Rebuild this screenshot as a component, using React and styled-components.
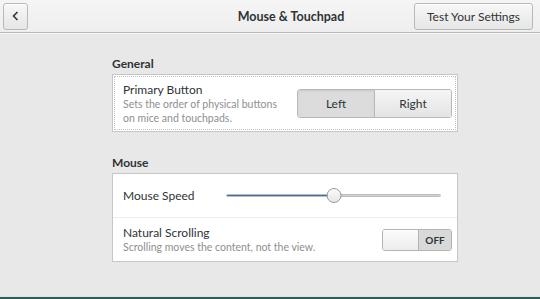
import styled, { createGlobalStyle } from "styled-components";

const GlobalStyle = createGlobalStyle`
  html, body {
    margin: 0;
    padding: 0;
    background: #e8e8e8;
  }
  body {
    font-family: Lato, "Noto Sans", sans-serif;
    color: #2e3436;
  }
`;

const Window = styled.div`
  width: 540px;
  height: 299px;
  display: flex;
  flex-direction: column;
  background: #e8e8e8;
  overflow: hidden;
`;

const HeaderBar = styled.div`
  height: 33px;
  box-sizing: border-box;
  display: flex;
  align-items: center;
  padding: 0 7px 0 3px;
  background: linear-gradient(#f5f5f5, #eeeeee);
  border-bottom: 1px solid #b9b9b9;
  box-shadow: 0 1px 0 #f6f6f6;
`;

const HeaderButton = styled.button`
  height: 27px;
  box-sizing: border-box;
  padding: 0 ${(props) => (props.icon ? "0" : "12px")};
  width: ${(props) => (props.icon ? "25px" : "119px")};
  display: flex;
  align-items: center;
  justify-content: center;
  border: 1px solid #b9b9b9;
  border-radius: 3px;
  background: linear-gradient(#f7f7f7, #e6e6e6);
  box-shadow: inset 0 1px 0 #ffffff;
  font-family: Lato, "Noto Sans", sans-serif;
  font-size: 12px;
  color: #2e3436;
`;

const Title = styled.div`
  flex: 1;
  display: flex;
  justify-content: center;
  padding-left: 140px;
  font-weight: bold;
  font-size: 12.5px;
`;

const Content = styled.div`
  flex: 1;
  display: flex;
  flex-direction: column;
  padding: 23px 0 0 112px;
`;

const Section = styled.div`
  width: 346px;
  margin-bottom: 23px;
`;

const SectionLabel = styled.div`
  font-weight: bold;
  font-size: 12px;
  line-height: 16px;
  margin-bottom: 2px;
`;

const Frame = styled.div`
  background: #ffffff;
  border: 1px solid #c6c6c6;
  outline: ${(props) => (props.focused ? "1px dotted #c0c0c0" : "none")};
  outline-offset: -3px;
`;

const Row = styled.div`
  display: flex;
  align-items: center;
  justify-content: space-between;
  height: ${(props) => props.h}px;
  padding: 0 5px 0 10px;
  border-top: ${(props) => (props.divided ? "1px solid #ececec" : "none")};
`;

const Labels = styled.div`
  display: flex;
  flex-direction: column;
`;

const RowTitle = styled.div`
  font-size: 12px;
  line-height: 15px;
`;

const RowSub = styled.div`
  font-size: 10.5px;
  line-height: 14px;
  color: #8d9091;
  max-width: ${(props) => props.wrap || "none"};
`;

const Segmented = styled.div`
  display: flex;
  height: 27px;
  border: 1px solid #b9b9b9;
  border-radius: 3px;
  overflow: hidden;
`;

const Segment = styled.div`
  width: 76px;
  display: flex;
  align-items: center;
  justify-content: center;
  font-size: 12px;
  background: ${(props) =>
    props.active ? "#dcdcdc" : "linear-gradient(#f5f5f5, #e4e4e4)"};
  box-shadow: ${(props) => (props.active ? "inset 0 1px 2px #c8c8c8" : "none")};
  border-left: ${(props) => (props.divided ? "1px solid #b9b9b9" : "none")};
`;

const Slider = styled.div`
  position: relative;
  width: 215px;
  height: 18px;
  display: flex;
  align-items: center;
  margin-right: 11px;
`;

const Track = styled.div`
  width: 100%;
  height: 3px;
  border-radius: 2px;
  background: #d2d2d2;
  border: 1px solid #bdbdbd;
  box-sizing: border-box;
  overflow: hidden;
`;

const Fill = styled.div`
  height: 100%;
  background: #3d6ea6;
`;

const Thumb = styled.div`
  position: absolute;
  top: 1px;
  width: 15px;
  height: 15px;
  box-sizing: border-box;
  border-radius: 50%;
  border: 1px solid #9a9a9a;
  background: linear-gradient(#fbfbfb, #e6e6e6);
  transform: translateX(-50%);
`;

const Switch = styled.div`
  display: flex;
  width: 70px;
  height: 22px;
  box-sizing: border-box;
  border: 1px solid #b4b4b4;
  border-radius: 3px;
  overflow: hidden;
`;

const SwitchKnob = styled.div`
  width: 35px;
  background: linear-gradient(#fcfcfc, #ececec);
  border-right: 1px solid #b4b4b4;
`;

const SwitchLabel = styled.div`
  flex: 1;
  display: flex;
  align-items: center;
  justify-content: center;
  background: #d9d9d9;
  font-size: 10px;
  font-weight: bold;
  color: #2e3436;
`;

const Footer = styled.div`
  height: 2px;
  background: #2f5e57;
  border-top: 1px solid #d3ebe4;
`;

const App = () => {
  const speed = 50;

  return (
    <Window>
      <GlobalStyle />
      <HeaderBar>
        <HeaderButton icon>
          <svg width="12" height="12" viewBox="0 0 12 12">
            <path d="M7.5 2 L3.5 6 L7.5 10" fill="none" stroke="#2e3436" strokeWidth="1.6" />
          </svg>
        </HeaderButton>
        <Title>Mouse &amp; Touchpad</Title>
        <HeaderButton>Test Your Settings</HeaderButton>
      </HeaderBar>
      <Content>
        <Section>
          <SectionLabel>General</SectionLabel>
          <Frame focused>
            <Row h={56}>
              <Labels>
                <RowTitle>Primary Button</RowTitle>
                <RowSub wrap="165px">Sets the order of physical buttons on mice and touchpads.</RowSub>
              </Labels>
              <Segmented>
                <Segment active>Left</Segment>
                <Segment divided>Right</Segment>
              </Segmented>
            </Row>
          </Frame>
        </Section>
        <Section>
          <SectionLabel>Mouse</SectionLabel>
          <Frame>
            <Row h={43}>
              <RowTitle>Mouse Speed</RowTitle>
              <Slider>
                <Track>
                  <Fill style={{ width: `${speed}%` }} />
                </Track>
                <Thumb style={{ left: `${speed}%` }} />
              </Slider>
            </Row>
            <Row h={43} divided>
              <Labels>
                <RowTitle>Natural Scrolling</RowTitle>
                <RowSub>Scrolling moves the content, not the view.</RowSub>
              </Labels>
              <Switch>
                <SwitchKnob />
                <SwitchLabel>OFF</SwitchLabel>
              </Switch>
            </Row>
          </Frame>
        </Section>
        <div style={{ flex: 1 }} />
      </Content>
      <Footer />
    </Window>
  );
};

export default App;
